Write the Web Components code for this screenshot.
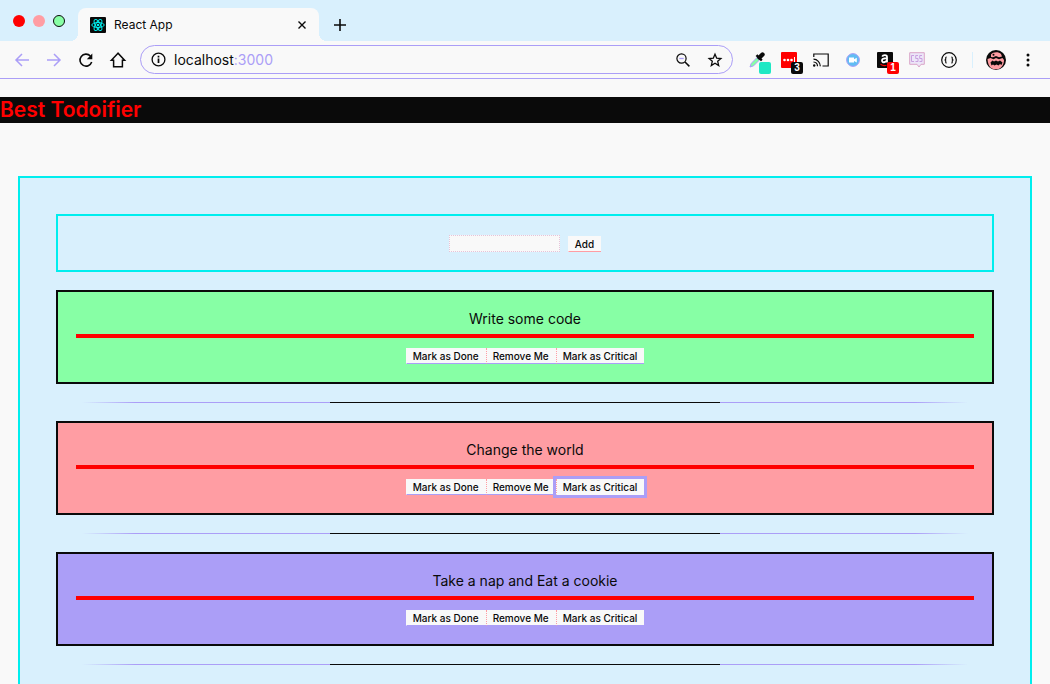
<!DOCTYPE html>
<html lang="en">
<head>
<meta charset="utf-8">
<title>React App</title>
<style>
html, body { margin: 0; height: 100%; }
body { font-family: Inter, "Liberation Sans", sans-serif; color: #0a0a0a; background: #f9f9f9;
  --sky: #d9f0fd; --cyan: #00eeee; --paper: #f9f9f9; --ink: #0a0a0a; --red: #ff0000; --lilac: #ab9ef7; --mint: #87ffa5; --rose: #ff9da3; }
</style>
</head>
<body>
<browser-window>
  <browser-tabs slot="tabs">React App</browser-tabs>
  <browser-toolbar slot="toolbar" host="localhost" port=":3000"></browser-toolbar>
  <todo-app>
    <todo-form></todo-form>
    <todo-card tone="mint">Write some code</todo-card>
    <todo-card tone="rose" active>Change the world</todo-card>
    <todo-card tone="lilac">Take a nap and Eat a cookie</todo-card>
  </todo-app>
</browser-window>

<script>
const define = (name, html, setup) => {
  const template = document.createElement('template');
  template.innerHTML = html;
  customElements.define(name, class extends HTMLElement {
    constructor() {
      super();
      this.attachShadow({ mode: 'open' }).append(template.content.cloneNode(true));
    }
    connectedCallback() { if (setup) setup(this, this.shadowRoot); }
  });
};

define('browser-window', `
<style>
:host { display: flex; flex-direction: column; height: 100vh; overflow: hidden; background: var(--paper); }
main { flex: 1; min-height: 0; overflow: hidden; }
</style>
<slot name="tabs"></slot><slot name="toolbar"></slot><main><slot></slot></main>`);

define('browser-tabs', `
<style>
:host { display: flex; align-items: flex-end; height: 41px; background: var(--sky); }
.lights { display: flex; gap: 8px; padding: 0 13px; align-self: center; }
.lights i { box-sizing: border-box; width: 12px; height: 12px; border-radius: 50%; background: var(--red); }
.lights i:nth-child(2) { background: var(--rose); }
.lights i:nth-child(3) { background: var(--mint); border: 1px solid var(--ink); }
.tab { position: relative; box-sizing: border-box; display: flex; align-items: center; width: 241px; height: 33px; padding: 0 10px 0 12px; background: var(--paper); border-radius: 8px 8px 0 0; font-size: 12px; line-height: 16px; }
.tab::before, .tab::after { content: ""; position: absolute; bottom: 0; width: 8px; height: 8px; }
.tab::before { right: 100%; background: radial-gradient(circle at 0 0, transparent 8px, var(--paper) 8px); }
.tab::after { left: 100%; background: radial-gradient(circle at 100% 0, transparent 8px, var(--paper) 8px); }
.tab span { flex: 1; padding-left: 8px; }
button { display: flex; padding: 0; border: 0; background: none; color: var(--ink); }
.new { margin-left: 12px; padding: 8px 0; }
</style>
<div class="lights"><i></i><i></i><i></i></div>
<div class="tab">
  <svg width="16" height="16" viewBox="0 0 16 16"><rect width="16" height="16" rx="1" fill="#0a0a0a"/><g fill="none" stroke="#00eeee"><ellipse cx="8" cy="8" rx="6.2" ry="2.5"/><ellipse cx="8" cy="8" rx="6.2" ry="2.5" transform="rotate(60 8 8)"/><ellipse cx="8" cy="8" rx="6.2" ry="2.5" transform="rotate(120 8 8)"/></g><circle cx="8" cy="8" r="1.3" fill="#00eeee"/></svg>
  <span><slot></slot></span>
  <button aria-label="Close tab"><svg width="14" height="14" viewBox="0 0 14 14"><path d="M3.5 3.5l7 7m0-7l-7 7" stroke="currentColor" stroke-width="1.4"/></svg></button>
</div>
<button class="new" aria-label="New tab"><svg width="18" height="16" viewBox="0 0 18 16"><path d="M9 2v12M3 8h12" stroke="currentColor" stroke-width="1.6"/></svg></button>`);

define('browser-toolbar', `
<style>
:host { display: flex; align-items: center; box-sizing: border-box; height: 38px; padding: 0 6px; border-bottom: 1px solid var(--lilac); }
button { display: flex; align-items: center; justify-content: center; flex: none; width: 32px; height: 32px; padding: 0; border: 0; background: none; color: var(--ink); }
button.dim { color: var(--lilac); }
svg { display: block; overflow: visible; fill: none; stroke: currentColor; stroke-width: 1.5; }
.address { box-sizing: border-box; flex: 1; min-width: 0; display: flex; align-items: center; height: 29px; margin: 0 8px 0 6px; padding: 0 1px 0 10px; border: 1px solid var(--lilac); border-radius: 15px; font-size: 14px; line-height: 18px; }
.url { flex: 1; padding-left: 8px; }
.url b { font-weight: 400; }
.url span { color: var(--lilac); }
.rule { width: 1px; height: 16px; margin: 0 7px; background: var(--sky); }
.ext { position: relative; }
.badge { position: absolute; right: 2px; bottom: 2px; width: 12px; height: 12px; border-radius: 2px; background: var(--ink); color: #fff; font-size: 10px; line-height: 12px; font-weight: 700; text-align: center; }
.badge.red { background: var(--red); }
.badge.teal { background: #1fe8c4; }
</style>
<button class="dim" aria-label="Back"><svg width="16" height="16" viewBox="0 0 16 16"><path d="M15 8H2M8 2L2 8l6 6"/></svg></button>
<button class="dim" aria-label="Forward"><svg width="16" height="16" viewBox="0 0 16 16"><path d="M1 8h13M8 2l6 6-6 6"/></svg></button>
<button aria-label="Reload"><svg width="16" height="16" viewBox="0 0 16 16"><path d="M12.4 4A6 6 0 1 0 13.7 10" stroke-width="1.6"/><path d="M14.3 1.6v5.6H8.8z" fill="currentColor" stroke="none"/></svg></button>
<button aria-label="Home"><svg width="16" height="16" viewBox="0 0 16 16"><path d="M8 1.2L1.4 8.2H3.6v6.5h8.8V8.2h2.2z"/></svg></button>
<div class="address">
  <svg width="15" height="15" viewBox="0 0 15 15"><circle cx="7.5" cy="7.5" r="6.4" stroke-width="1.3"/><path d="M7.5 6.5V11M7.5 3.8v1.7" stroke-width="1.7"/></svg>
  <div class="url"><b></b><span></span></div>
  <button aria-label="Zoom"><svg width="14" height="14" viewBox="0 0 14 14"><circle cx="5.5" cy="5.5" r="4.6" stroke-width="1.2"/><path d="M9 9l4.4 4.4" stroke-width="1.5"/><path d="M3.3 5.5h4.4" stroke="#ab9ef7" stroke-width="1.3"/></svg></button>
  <button aria-label="Bookmark"><svg width="14" height="14" viewBox="0 0 14 14"><path d="M7 1.2l1.7 4 4.2.3-3.2 2.8 1 4.2L7 10.2l-3.7 2.3 1-4.2L1.1 5.5l4.2-.3z" stroke-width="1.3"/></svg></button>
</div>
<button class="ext" aria-label="Color picker"><svg width="16" height="16" viewBox="0 0 16 16"><path d="M1 15l1.2-3.6L8 5.6l2.4 2.4-5.8 5.8z" fill="#87ffa5" stroke="#ab9ef7" stroke-width="1"/><path d="M7.5 3.2l5.3 5.3" stroke-width="2.4"/><path d="M10.5 5.5l3-3" stroke-width="4.4" stroke-linecap="round"/></svg><i class="badge teal"></i></button>
<button class="ext" aria-label="Password manager"><svg width="16" height="16" viewBox="0 0 16 16"><rect width="16" height="16" rx="1" fill="#ff0000" stroke="none"/><g fill="#fff" stroke="none"><circle cx="3.5" cy="8" r="1.3"/><circle cx="7" cy="8" r="1.3"/><circle cx="10.5" cy="8" r="1.3"/><path d="M13 5h1v6h-1z"/></g></svg><span class="badge">3</span></button>
<button aria-label="Cast"><svg width="16" height="14" viewBox="0 0 16 14"><path d="M.8 4V1h14.4v12H9.5" stroke-width="1.2"/><path d="M.5 6.2a7 7 0 0 1 6.8 7M.5 9a4.3 4.3 0 0 1 4 4.2" stroke-width="1.2"/><circle cx="1.2" cy="12.5" r="1.2" fill="currentColor" stroke="none"/></svg></button>
<button aria-label="Video calls"><svg width="14" height="14" viewBox="0 0 14 14"><circle cx="7" cy="7" r="6.4" fill="#61bdf3" stroke="#ab9ef7" stroke-width="1"/><path d="M3 4.5h5v1.7l2.8-1.5v4.8L8 8v1.5H3z" fill="#fff" stroke="none"/></svg></button>
<button class="ext" aria-label="Shopping"><svg width="16" height="16" viewBox="0 0 16 16"><rect width="16" height="16" rx="1" fill="#0a0a0a" stroke="none"/><path d="M5.2 4.7C6 2.7 10 2.6 10 5v5.5M10 6.2c-3.2 0-5 .8-5 2.4 0 2.4 4 2.1 5-.4" stroke="#fff" stroke-width="1.8"/><path d="M3.5 12.3c2 1.4 4 1.6 6 1" stroke="#ff0000" stroke-width="1.2"/></svg><span class="badge red">1</span></button>
<button aria-label="Style viewer"><svg width="16" height="16" viewBox="0 0 16 16"><path d="M.7.7h14.6v11.6H12L10 15l-2-2.7H.7z" fill="#ece6f8" stroke="#dba6c8" stroke-width="1"/><path d="M5 3.5H2.5v6H5M9 3.5H6.7v3H9v3H6.5M13 3.5h-2.3v3H13v3h-2.5" stroke="#c9a0e0" stroke-width="1"/></svg></button>
<button aria-label="JSON viewer"><svg width="16" height="16" viewBox="0 0 16 16"><circle cx="8" cy="8" r="7.3" stroke-width="1.2"/><path d="M5.6 5c-1.3 0-.7 1.7-.9 2.4L4 8l.7.6c.2.7-.4 2.4.9 2.4M10.4 5c1.3 0 .7 1.7.9 2.4L12 8l-.7.6c-.2.7.4 2.4-.9 2.4" stroke-width="1.1"/></svg></button>
<div class="rule"></div>
<button aria-label="Profile"><svg width="20" height="20" viewBox="0 0 20 20"><circle cx="10" cy="10" r="10" fill="#0a0a0a" stroke="none"/><path d="M5 4.5C7 1.5 13 1.5 15 4l1 2.5-3 .8-3-1.3-3 1.3-2-.3zM1.5 9l3-1 3 1.2L10 8l3 1.2L16.5 8l1.5 2c0 5-3 8.5-6 9.3H8C4 18.500 2 15 1.500 9z" fill="#ff9da3" stroke="none"/><path d="M4.500 12.500l2-2 1.500 1 2-1 2 1 2-1 2.500 2-1 2.500-1.500-1-1.500 1.500-2-1-2 1-1.500-1-1.500 1z" fill="#0a0a0a" stroke="none"/><circle cx="7.500" cy="4.800" r="1" fill="#0a0a0a" stroke="none"/></svg></button>
<button aria-label="Menu"><svg width="4" height="14" viewBox="0 0 4 14"><g fill="currentColor" stroke="none"><circle cx="2" cy="2" r="1.5"/><circle cx="2" cy="7" r="1.5"/><circle cx="2" cy="12" r="1.5"/></g></svg></button>`,
(el, root) => {
  root.querySelector('.url b').textContent = el.getAttribute('host');
  root.querySelector('.url span').textContent = el.getAttribute('port');
});

define('todo-app', `
<style>
:host { display: block; padding-top: 18px; }
h1 { margin: 0; background: var(--ink); color: var(--red); font-size: 21px; line-height: 26px; font-weight: 600; }
section { display: flex; flex-direction: column; gap: 18px; margin: 53px 18px 18px; padding: 36px; border: 2px solid var(--cyan); background: var(--sky); }
</style>
<h1>Best Todoifier</h1>
<section><slot></slot></section>`);

define('todo-form', `
<style>
:host { display: block; border: 2px solid var(--cyan); padding: 18px; }
form { display: flex; justify-content: center; align-items: flex-end; gap: 8px; height: 18px; }
input { box-sizing: border-box; width: 111px; height: 17px; padding: 1px; border: 1px dotted #e6c3d8; background: var(--paper); font: 10px Inter, sans-serif; }
todo-button { --edge: var(--rose); }
</style>
<form><input type="text" aria-label="New todo"><todo-button>Add</todo-button></form>`);

define('todo-button', `
<style>
:host { display: block; }
button { display: block; box-sizing: border-box; height: 16px; padding: 0 7px 0 6px; border: 0 solid; border-left: 1px dotted var(--divider, var(--paper)); border-bottom: 1px solid var(--edge, var(--lilac)); background: var(--paper); color: var(--ink); font: 500 10px/16px Inter, sans-serif; white-space: nowrap; }
:host([focused]) button { outline: 3px solid var(--lilac); border-bottom-color: var(--paper); }
</style>
<button type="button"><slot></slot></button>`);

define('todo-card', `
<style>
:host { display: block; }
article { border: 2px solid var(--ink); padding: 18px; background: var(--mint); }
:host([tone=rose]) article { background: var(--rose); }
:host([tone=lilac]) article { background: var(--lilac); }
h2 { margin: 0 0 10px; padding-bottom: 6px; border-bottom: 4px solid var(--red); font-size: 14px; line-height: 18px; font-weight: 400; text-align: center; }
.actions { display: flex; justify-content: center; }
todo-button + todo-button { --divider: var(--rose); }
todo-button[focused] { position: relative; }
hr { height: 1px; margin: 18px 26px 0; border: 0; background: linear-gradient(90deg, transparent, var(--lilac) 6%, var(--lilac) 28%, var(--ink) 28%, var(--ink) 72%, var(--lilac) 72%, var(--lilac) 94%, transparent); }
</style>
<article>
  <h2><slot></slot></h2>
  <div class="actions"><todo-button>Mark as Done</todo-button><todo-button>Remove Me</todo-button><todo-button class="critical">Mark as Critical</todo-button></div>
</article>
<hr>`,
(el, root) => root.querySelector('.critical').toggleAttribute('focused', el.hasAttribute('active')));
</script>
</body>
</html>
